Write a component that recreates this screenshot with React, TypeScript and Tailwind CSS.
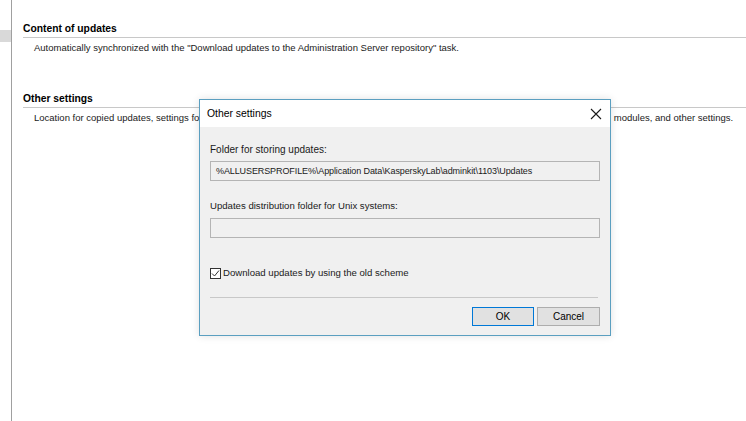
import React from 'react';

const font = { fontFamily: '"Liberation Sans", Arial, sans-serif' };

const Section: React.FC<{ title: string; children: React.ReactNode }> = ({ title, children }) => (
  <div>
    <div className="font-bold text-[10.3px] leading-[14px] text-black">{title}</div>
    <div className="h-px bg-[#c8c8c8] mt-[1px]" />
    <div className="pl-[11px] pt-[3px] text-[9.5px] leading-[14px] text-[#1a1a1a] whitespace-nowrap">{children}</div>
  </div>
);

const OtherSettingsDialog: React.FC = () => (
  <div className="absolute left-[199px] top-[99px] w-[412px] h-[237px] border border-[#5b9fc0] bg-[#f0f0f0] flex flex-col shadow-[0_0_8px_rgba(0,0,0,0.12)]">
    <div className="h-[27px] bg-white flex items-center justify-between pl-[7px] pr-[7px]">
      <span className="text-[10.4px] text-black">Other settings</span>
      <svg width="12" height="12" viewBox="0 0 12 12" className="mr-[1px]">
        <path d="M1 1 L11 11 M11 1 L1 11" stroke="#1a1a1a" strokeWidth="1.1" />
      </svg>
    </div>
    <div className="flex-1 px-[10px] pt-[15px] text-[9.6px] text-[#1a1a1a]">
      <div className="leading-[16px] text-[10px]">Folder for storing updates:</div>
      <div className="mt-[3px] h-[20px] border border-[#b4b4b4] bg-[#f0f0f0] flex items-center pl-[5px] leading-[16px] whitespace-nowrap text-[9px] tracking-[-0.1px]">
        %ALLUSERSPROFILE%\Application Data\KasperskyLab\adminkit\1103\Updates
      </div>
      <div className="mt-[17px] leading-[16px]">Updates distribution folder for Unix systems:</div>
      <div className="mt-[4px] h-[20px] border border-[#b4b4b4] bg-[#f0f0f0]" />
      <div className="mt-[27px] flex items-center gap-[2px] leading-[16px]">
        <span className="w-[11px] h-[11px] border border-[#333] bg-white flex items-center justify-center">
          <svg width="9" height="9" viewBox="0 0 9 9">
            <path d="M1 4.5 L3.5 7 L8 1.5" stroke="#333" strokeWidth="1" fill="none" />
          </svg>
        </span>
        <span>Download updates by using the old scheme</span>
      </div>
      <div className="mt-[16px] h-px bg-[#c8c8c8] mr-[2px]" />
      <div className="mt-[9px] flex justify-end gap-[3px]">
        <button className="w-[62px] h-[19px] border border-[#0078d7] bg-[#e1e1e1] text-[10px] leading-[16px] text-black">
          OK
        </button>
        <button className="w-[63px] h-[19px] border border-[#adadad] bg-[#e1e1e1] text-[10px] leading-[16px] text-black">
          Cancel
        </button>
      </div>
    </div>
  </div>
);

export default function App() {
  return (
    <div className="relative w-[746px] h-[421px] bg-white overflow-hidden" style={font}>
      <div className="flex h-full">
        <div className="w-[12px] border-r border-[#a0a0a0] pt-[30px] shrink-0">
          <div className="h-[12px] bg-[#d9d9d9]" />
        </div>
        <div className="flex-1 pl-[11px] pt-[22px] flex flex-col gap-[37px]">
          <Section title="Content of updates">
            Automatically synchronized with the "Download updates to the Administration Server repository" task.
          </Section>
          <Section title="Other settings">
            Location for copied updates, settings for downloading updates for Administration Server, Network Agents, administration console plug-ins, modules, and other settings.
          </Section>
        </div>
      </div>
      <OtherSettingsDialog />
    </div>
  );
}
